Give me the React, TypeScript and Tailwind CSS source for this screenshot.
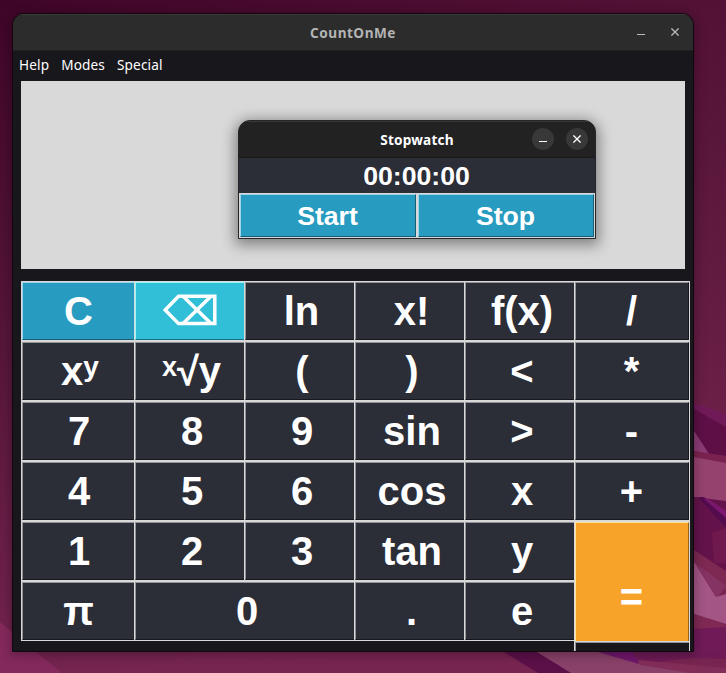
import type { ReactNode } from 'react';
import clsx from 'clsx';

type Tone = 'dark' | 'blue' | 'cyan' | 'orange';
type Key = { label: ReactNode; cell?: string; face?: string; tone?: Tone };

const tones: Record<Tone, string> = {
  dark: 'bg-[#2b2d37] border-t-[#929398] border-l-[#929398] border-b-[#17181d]',
  blue: 'bg-[#279bc0] border-t-[#9bd4ea] border-l-[#9bd4ea] border-b-[#155e76]',
  cyan: 'bg-[#31bfd8] border-t-[#9cf5f8] border-l-[#9cf5f8] border-b-[#147384]',
  orange: 'bg-[#f7a32a] border-t-[#ffe39b] border-l-[#ffe39b] border-b-[#f7a32a]',
};

function BackspaceGlyph() {
  return (
    <svg width="54" height="32" viewBox="0 0 54 32" fill="none" stroke="white" strokeWidth="3.5" className="relative -top-px">
      <path d="M15.5 2.2H51.8V29.6H15.5L2.2 16Z" />
      <path d="M20 2.2L48 29.6M48 2.2L20 29.6" />
    </svg>
  );
}

const mid = 'pl-[4px]';
const last = 'border-r border-r-[#d9d9d9]';
const lastFace = 'border-r border-r-[#17181d] pr-px';
const first = 'pl-px';

const keys: Key[] = [
  { label: 'C', tone: 'blue' },
  { label: <BackspaceGlyph />, tone: 'cyan' },
  { label: 'ln', face: 'pl-[3px]' },
  { label: 'x!', face: 'pl-[3px]' },
  { label: 'f(x)', face: mid },
  { label: '/', cell: last, face: lastFace },

  { label: <>x<span className="relative -top-[9px] text-[28px]">y</span></>, face: 'pl-[3px]' },
  { label: <><span className="relative -top-[9px] text-[27px]">x</span>√y</>, face: 'pl-[3px]' },
  { label: '(', face: mid },
  { label: ')', face: mid },
  { label: '<', face: mid },
  { label: '*', cell: last, face: lastFace },

  { label: '7', face: first },
  { label: '8', face: mid },
  { label: '9', face: mid },
  { label: 'sin', face: mid },
  { label: '>', face: mid },
  { label: '-', cell: last, face: lastFace },

  { label: '4', face: first },
  { label: '5', face: mid },
  { label: '6', face: mid },
  { label: 'cos', face: mid },
  { label: 'x', face: mid },
  { label: '+', cell: last, face: lastFace },

  { label: '1', face: first },
  { label: '2', face: mid },
  { label: '3', face: mid },
  { label: 'tan', face: mid },
  { label: 'y', face: mid },
  { label: '=', tone: 'orange', cell: 'row-span-2 h-[120px] border-r border-r-[#d9d9d9] border-b-0', face: 'border-r border-r-[#96631a] border-b-0 pt-[29px] pr-px' },

  { label: 'π' },
  { label: '0', cell: 'col-span-2', face: mid },
  { label: '.', face: 'pl-[3px]' },
  { label: 'e', face: mid },
];

function CalcKey({ label, cell, face, tone = 'dark' }: Key) {
  return (
    <button className={clsx('flex border-t border-l border-b border-[#d9d9d9]', cell)}>
      <span className={clsx('flex h-full w-full items-center justify-center border-t border-l border-b', tones[tone], face)}>
        <span className="leading-none whitespace-nowrap">{label}</span>
      </span>
    </button>
  );
}

function Wallpaper() {
  return (
    <svg className="absolute inset-0" width="726" height="673" viewBox="0 0 726 673">
      <defs>
        <linearGradient id="base" x1="0" y1="0" x2="0.15" y2="1">
          <stop offset="0" stopColor="#3f0528" />
          <stop offset="0.5" stopColor="#561639" />
          <stop offset="1" stopColor="#762450" />
        </linearGradient>
        <linearGradient id="sheen" x1="0" y1="0" x2="1" y2="0">
          <stop offset="0" stopColor="#7b2751" stopOpacity="0" />
          <stop offset="1" stopColor="#7b2751" stopOpacity="0.25" />
        </linearGradient>
      </defs>
      <rect width="726" height="673" fill="url(#base)" />
      <rect width="726" height="673" fill="url(#sheen)" />
      <path d="M0 622L62 673H0Z" fill="#84295c" />
      <path d="M694 403L726 414V430L694 409Z" fill="#711a58" />
      <path d="M694 409L726 427V456L709 454L694 431Z" fill="#5d0f46" />
      <path d="M694 431L709 454L694 451Z" fill="#8b3b74" />
      <path d="M694 451L726 456V463L694 457Z" fill="#7b2350" />
      <path d="M694 457L726 463V502L694 497Z" fill="#95426f" />
      <path d="M694 497L726 501V578L694 550Z" fill="#64134a" />
      <path d="M712 533L726 528V563H714Z" fill="#70194f" />
      <path d="M698 497H704L726 517V528Z" fill="#530b4d" />
      <path d="M703 498L710 500L726 511V518Z" fill="#7b176e" />
      <path d="M694 550L726 571V590L694 562Z" fill="#7e2953" />
      <path d="M694 562L726 586L717 598Z" fill="#843363" />
      <path d="M694 562L716 597L726 594V624L694 614Z" fill="#a35585" />
      <path d="M694 614L726 625V628L694 629Z" fill="#802955" />
      <path d="M694 629L726 627V658L694 655Z" fill="#711a58" />
      <path d="M504 652H537L580 673H538Z" fill="#5b1048" />
      <path d="M537 652H600L700 673H571Z" fill="#894169" />
      <path d="M598 652H635L639 664Z" fill="#6f176b" />
      <path d="M632 652H726V659L690 658L640 664Z" fill="#6e1b55" />
      <path d="M638 660L726 668V673H690L640 665Z" fill="#822d58" />
    </svg>
  );
}

function CloseGlyph({ className }: { className?: string }) {
  return (
    <svg width="8" height="8" viewBox="0 0 8 8" stroke="currentColor" strokeWidth="1.3" className={className}>
      <path d="M.4 .4L7.6 7.6M7.6 .4L.4 7.6" />
    </svg>
  );
}

function Stopwatch() {
  const button = 'flex h-[43px] items-center justify-center border border-t-[#9bd4ea] border-l-[#9bd4ea] border-r-[#155e76] border-b-[#155e76] bg-[#279bc0] pr-px pt-[2px]';
  return (
    <section className="absolute left-[238px] top-[120px] h-[119px] w-[358px] overflow-hidden rounded-t-[12px] border border-[#25252a] bg-[#2b2d37] shadow-[0_3px_14px_3px_rgba(0,0,0,0.4)]">
      <header className="relative flex h-[37px] items-center justify-center border-t border-b border-t-[#393939] border-b-[#181818] bg-[#222222] font-['Noto_Sans',sans-serif] text-[13.6px] font-bold tracking-[0.2px] text-white">
        <span className="pt-px">Stopwatch</span>
        <div className="absolute right-[7px] top-[6px] flex gap-3">
          <button className="flex h-[22px] w-[22px] items-center justify-center rounded-full bg-[#383838]">
            <span className="mt-[5px] h-px w-2 bg-white" />
          </button>
          <button className="flex h-[22px] w-[22px] items-center justify-center rounded-full bg-[#383838]">
            <CloseGlyph />
          </button>
        </div>
      </header>
      <div className="flex h-[35px] items-center justify-center pt-[2px] pr-px text-[26.67px] leading-none">00:00:00</div>
      <div className="grid grid-cols-[176px_176px] gap-[2px] border border-[#d9d9d9] bg-[#d9d9d9] text-[26.67px] leading-none">
        <button className={button}>Start</button>
        <button className={button}>Stop</button>
      </div>
    </section>
  );
}

export default function App() {
  return (
    <div className="relative h-[673px] w-[726px] overflow-hidden font-['Liberation_Sans',sans-serif] font-bold text-white">
      <Wallpaper />
      <main className="absolute left-[12px] top-[13px] h-[639px] w-[682px] overflow-hidden rounded-t-[12px] border border-[#14060f] bg-[#18171c] shadow-[0_2px_10px_2px_rgba(0,0,0,0.25)]">
        <header className="relative flex h-[37px] items-center justify-center border-t border-b border-t-[#3a3a3a] border-b-[#202020] bg-[#2c2c2c] font-['Noto_Sans',sans-serif] text-[13.6px] tracking-[0.5px] text-[#b4b4b4]">
          <span className="pt-px">CountOnMe</span>
          <div className="absolute right-[14px] top-[13px] flex items-center gap-[26px] text-[#b9b9b9]">
            <span className="mt-[5px] h-px w-2 bg-[#b9b9b9]" />
            <CloseGlyph />
          </div>
        </header>
        <nav className="flex h-[30px] items-center gap-3 pl-[6px] pb-[2px] font-['Noto_Sans',sans-serif] text-[13.6px] font-normal tracking-[0.14px]">
          <span>Help</span>
          <span>Modes</span>
          <span>Special</span>
        </nav>
        <div className="ml-[8px] h-[188px] w-[664px] bg-[#d9d9d9]" />
        <div className="mt-[12px] ml-[8px] grid w-[669px] auto-rows-[60px] grid-cols-[113px_110px_110px_110px_110px_116px] text-[40px]">
          {keys.map((key, i) => (
            <CalcKey key={i} {...key} />
          ))}
        </div>
        <div className="ml-[561px] h-[10px] w-[116px] border-t border-r border-l border-[#d9d9d9]">
          <div className="h-full border-t border-l border-[#929398]" />
        </div>
      </main>
      <Stopwatch />
    </div>
  );
}
